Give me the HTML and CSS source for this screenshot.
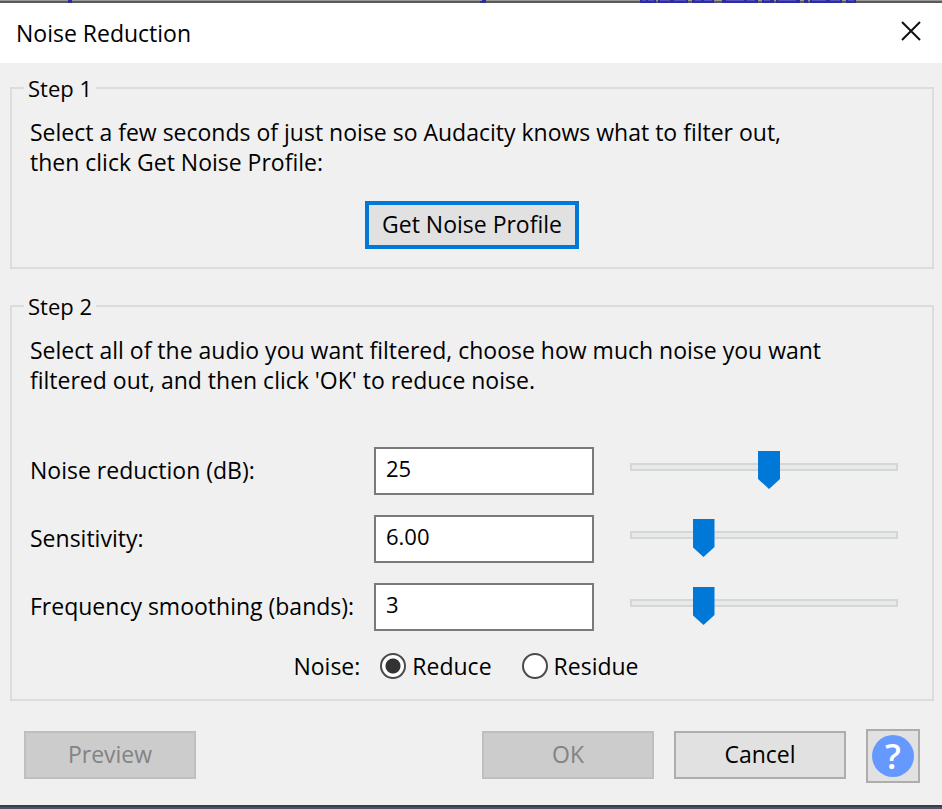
FILE: index.html
```html
<!DOCTYPE html>
<html lang="en">
<head>
    <meta charset="UTF-8">
    <meta name="viewport" content="width=device-width, initial-scale=1.0">
    <title>Noise Reduction</title>
    <link rel="stylesheet" href="styles.css">
</head>
<body>
    <!-- strip of the track window behind the dialog -->
    <div class="backdrop-top">
        <svg width="942" height="3" aria-hidden="true">
            <path fill="#2d2d9c" d="M68 0h4v3h-4zM480 1h6v2h-6zM482 0h4v1h-4zM640 0h16v3h-16zM658 0h30v3h-30zM692 0h22v3h-22zM722 0h36v3h-36zM762 0h12v3h-12zM776 0h24v3h-24zM804 0h4v3h-4zM810 0h32v3h-32zM846 0h10v3h-10z"/>
            <path fill="#5050c0" d="M642 0h4v1h-4zM648 0h6v1h-6zM660 0h10v1h-10zM674 0h12v1h-12zM695 0h6v1h-6zM704 0h8v1h-8zM726 0h18v1h-18zM747 0h8v1h-8zM764 0h6v1h-6zM778 0h18v1h-18zM812 0h14v1h-14zM830 0h10v1h-10zM848 0h6v1h-6z"/>
        </svg>
    </div>

    <form class="dialog">
        <header class="titlebar">
            <h1 class="title">Noise Reduction</h1>
            <button type="button" class="close" aria-label="Close">
                <svg width="20" height="20" viewBox="0 0 20 20" aria-hidden="true">
                    <path d="M1 1L19 19M19 1L1 19" fill="none" stroke="#111" stroke-width="2"/>
                </svg>
            </button>
        </header>

        <main class="content">
            <fieldset class="step">
                <legend>Step 1</legend>
                <p>Select a few seconds of just noise so Audacity knows what to filter out,<br>then click Get Noise Profile:</p>
                <button type="button" class="button profile">Get Noise Profile</button>
            </fieldset>

            <fieldset class="step">
                <legend>Step 2</legend>
                <p>Select all of the audio you want filtered, choose how much noise you want<br>filtered out, and then click 'OK' to reduce noise.</p>

                <div class="settings">
                    <label for="reduction">Noise reduction (dB):</label>
                    <input type="text" class="value" id="reduction" value="25">
                    <input type="range" class="slider" aria-label="Noise reduction" min="0" max="48" value="25">

                    <label for="sensitivity">Sensitivity:</label>
                    <input type="text" class="value" id="sensitivity" value="6.00">
                    <input type="range" class="slider" aria-label="Sensitivity" min="0" max="24" step="0.01" value="6">

                    <label for="smoothing">Frequency smoothing (bands):</label>
                    <input type="text" class="value" id="smoothing" value="3">
                    <input type="range" class="slider" aria-label="Frequency smoothing" min="0" max="12" value="3">
                </div>

                <div class="noise" role="radiogroup" aria-labelledby="noiseLabel">
                    <span id="noiseLabel">Noise:</span>
                    <label class="choice"><input type="radio" name="noise" value="reduce" checked>Reduce</label>
                    <label class="choice"><input type="radio" name="noise" value="residue">Residue</label>
                </div>
            </fieldset>
        </main>

        <footer class="actions">
            <button type="button" class="button preview" disabled>Preview</button>
            <button type="submit" class="button" disabled>OK</button>
            <button type="button" class="button">Cancel</button>
            <button type="button" class="help" aria-label="Help"><span class="help-mark">?</span></button>
        </footer>
    </form>
</body>
</html>
```
FILE: styles.css
```css
* {
    box-sizing: border-box;
}

body {
    margin: 0;
    min-height: 100vh;
    display: flex;
    flex-direction: column;
    background-color: #50506b;
    color: #000;
    font-family: "Open Sans", "Noto Sans", sans-serif;
    font-size: 23px;
    line-height: 30px;
}

button,
input {
    font: inherit;
    color: inherit;
}

.backdrop-top {
    height: 3px;
    overflow: hidden;
    background: linear-gradient(#999 1px, #5a5a5a 1px);
}

.backdrop-top svg {
    display: block;
}

.dialog {
    background-color: #f0f0f0;
    border-bottom: 2px solid #3a3d45;
}

.titlebar {
    display: flex;
    align-items: center;
    justify-content: space-between;
    height: 60px;
    padding: 0 16px;
    background-color: #fff;
}

.title {
    margin: 0;
    font-size: 23px;
    font-weight: normal;
}

.close {
    display: flex;
    padding: 5px;
    margin-bottom: 4px;
    border: 0;
    background: none;
}

.content {
    display: flex;
    flex-direction: column;
    gap: 22px;
    padding: 10px 8px 0 10px;
}

.step {
    display: flex;
    flex-direction: column;
    min-width: 0;
    margin: 0;
    padding: 14px 18px 18px;
    border: 2px solid #dcdcdc;
}

.step legend {
    margin-left: -6px;
    padding: 0 4px;
    font-size: 22px;
}

.step p {
    margin: 0;
    white-space: nowrap;
}

.button {
    width: 172px;
    height: 48px;
    padding: 0 0 2px;
    border: 2px solid #adadad;
    background-color: #e1e1e1;
}

.button:disabled {
    border-color: #bfbfbf;
    background-color: #ccc;
    color: #838383;
}

.profile {
    align-self: center;
    width: 214px;
    margin-top: 24px;
    border: 4px solid #0078d7;
}

.settings {
    display: grid;
    grid-template-columns: 344px 220px 1fr;
    row-gap: 20px;
    align-items: center;
    margin-top: 52px;
}

.settings label {
    padding-bottom: 2px;
}

.value {
    width: 100%;
    height: 48px;
    padding: 0 10px 6px;
    border: 2px solid #7a7a7a;
    border-radius: 0;
    background-color: #fff;
    font-size: 22px;
}

.slider {
    -webkit-appearance: none;
    appearance: none;
    height: 8px;
    margin: 0 16px 8px 36px;
    background: none;
}

.slider::-webkit-slider-runnable-track {
    height: 8px;
    border: 2px solid #d6d6d6;
    background-color: #e7eaea;
}

.slider::-webkit-slider-thumb {
    -webkit-appearance: none;
    width: 22px;
    height: 38px;
    margin-top: -14px;
    background-color: #0078d7;
    clip-path: polygon(0 0, 100% 0, 100% 28px, 50% 100%, 0 28px);
}

.noise {
    display: flex;
    justify-content: center;
    margin-top: 20px;
    padding-right: 12px;
}

.choice {
    display: flex;
    align-items: center;
    gap: 6px;
    margin-left: 20px;
}

.choice + .choice {
    margin-left: 30px;
}

.choice input {
    -webkit-appearance: none;
    appearance: none;
    width: 26px;
    height: 26px;
    margin: 0;
    border: 2px solid #4a4a4a;
    border-radius: 50%;
    background-color: #fff;
}

.choice input:checked {
    background-image: radial-gradient(circle, #333 7px, #fff 8px);
}

.actions {
    display: flex;
    align-items: flex-start;
    gap: 20px;
    padding: 28px 22px 22px 24px;
}

.actions .button {
    margin-top: 2px;
}

.preview {
    margin-right: auto;
}

.help {
    display: flex;
    align-items: center;
    justify-content: center;
    width: 54px;
    height: 54px;
    padding: 0;
    border: 2px solid #adadad;
    background-color: #e1e1e1;
}

.help-mark {
    width: 42px;
    height: 42px;
    border-radius: 50%;
    background-color: #69f;
    color: #fff;
    font-size: 35px;
    font-weight: 600;
    line-height: 42px;
}
```
